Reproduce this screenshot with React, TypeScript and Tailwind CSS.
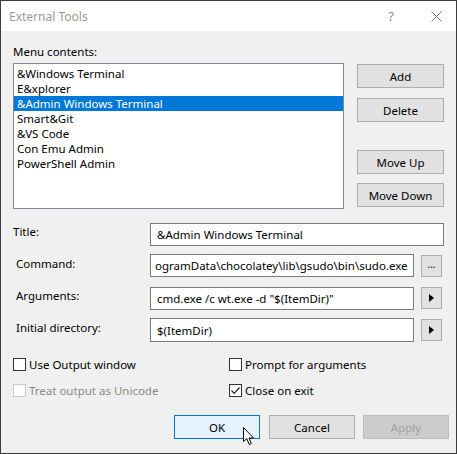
const items = [
  "&Windows Terminal",
  "E&xplorer",
  "&Admin Windows Terminal",
  "Smart&Git",
  "&VS Code",
  "Con Emu Admin",
  "PowerShell Admin",
];

function SideButton({ label, className }: { label: string; className?: string }) {
  return (
    <div
      className={`flex h-[24px] w-[87px] items-center justify-center border border-[#adadad] bg-[#e1e1e1] text-black ${className ?? ""}`}
    >
      {label}
    </div>
  );
}

function Arrow() {
  return (
    <div className="flex h-[22px] w-[21px] items-center justify-center border border-[#adadad] bg-[#e1e1e1]">
      <svg width="5" height="8" viewBox="0 0 5 8">
        <path d="M0 0 L5 4 L0 8 Z" fill="#000" />
      </svg>
    </div>
  );
}

function Check({ checked, disabled, label }: { checked?: boolean; disabled?: boolean; label: string }) {
  return (
    <div className="flex h-[13px] items-center">
      <div
        className={`flex h-[13px] w-[13px] items-center justify-center border bg-white ${disabled ? "border-[#cccccc]" : "border-[#333333]"}`}
      >
        {checked && (
          <svg width="11" height="11" viewBox="0 0 11 11">
            <path d="M1.5 5.5 L4.2 8.3 L9.5 2.5" stroke="#222" strokeWidth="1.2" fill="none" />
          </svg>
        )}
      </div>
      <span className={`ml-[3px] ${disabled ? "text-[#8a8a8a]" : "text-black"}`}>{label}</span>
    </div>
  );
}

export default function App() {
  return (
    <div className="flex h-[454px] w-[457px] flex-col border border-[#3c3c3c] bg-[#f0f0f0] text-[11.5px] leading-[15px] text-black [font-family:'Noto_Sans',sans-serif]">
      {/* title bar */}
      <div className="flex h-[30px] shrink-0 items-center bg-white pl-[8px] text-[#999999]">
        <span className="text-[12px]">External Tools</span>
        <span className="ml-auto text-[13px] text-[#888]">?</span>
        <svg className="ml-[37px] mr-[14px]" width="11" height="11" viewBox="0 0 11 11">
          <path d="M0.5 0.5 L10.5 10.5 M10.5 0.5 L0.5 10.5" stroke="#777" strokeWidth="1" />
        </svg>
      </div>

      <div className="relative flex flex-1 flex-col pl-[12px]">
        <div className="mt-[13px]">Menu contents:</div>

        <div className="mt-[4px] flex">
          <div className="h-[146px] w-[331px] border border-[#828790] bg-white pt-[2px]">
            {items.map((it, i) => (
              <div
                key={it}
                className={`flex h-[15px] items-center pl-[3px] ${i === 2 ? "bg-[#0078d7] text-white" : ""}`}
              >
                {it}
              </div>
            ))}
          </div>
          <div className="ml-[13px] flex flex-col pt-[1px]">
            <SideButton label="Add" />
            <SideButton label="Delete" className="mt-[10px]" />
            <SideButton label="Move Up" className="mt-[28px]" />
            <SideButton label="Move Down" className="mt-[9px]" />
          </div>
        </div>

        {/* form */}
        <div className="mt-[14px] flex items-start">
          <div className="w-[137px] pt-[1px]">Title:</div>
          <div className="flex h-[23px] w-[294px] items-center border border-[#7a7a7a] bg-white px-[6px]">
            &Admin Windows Terminal
          </div>
        </div>
        <div className="mt-[8px] flex items-start">
          <div className="w-[137px] pl-[3px] pt-[2px]">Command:</div>
          <div className="flex h-[23px] w-[264px] items-center overflow-hidden whitespace-nowrap border border-[#7a7a7a] bg-white px-[4px]">
            ogramData\chocolatey\lib\gsudo\bin\sudo.exe
          </div>
          <div className="ml-[7px] mt-[1px] flex h-[22px] w-[21px] items-center justify-center border border-[#adadad] bg-[#e1e1e1] pb-[4px] text-[10px]">
            ...
          </div>
        </div>
        <div className="mt-[10px] flex items-start">
          <div className="w-[137px] pl-[3px] pt-[1px]">Arguments:</div>
          <div className="flex h-[23px] w-[264px] items-center border border-[#7a7a7a] bg-white px-[6px]">
            cmd.exe /c wt.exe -d "$(ItemDir)"
          </div>
          <div className="ml-[7px]">
            <Arrow />
          </div>
        </div>
        <div className="mt-[8px] flex items-start">
          <div className="w-[137px] pl-[3px] pt-[2px]">Initial directory:</div>
          <div className="flex h-[24px] w-[264px] items-center border border-[#7a7a7a] bg-white px-[6px]">
            $(ItemDir)
          </div>
          <div className="ml-[7px] mt-[1px]">
            <Arrow />
          </div>
        </div>

        {/* checkboxes */}
        <div className="mt-[16px] flex">
          <div className="w-[216px]">
            <Check label="Use Output window" />
          </div>
          <Check label="Prompt for arguments" />
        </div>
        <div className="mt-[13px] flex">
          <div className="w-[216px]">
            <Check disabled label="Treat output as Unicode" />
          </div>
          <Check checked label="Close on exit" />
        </div>

        {/* bottom buttons */}
        <div className="mt-[18px] flex pl-[161px]">
          <div className="flex h-[24px] w-[86px] items-center justify-center border border-[#0078d7] bg-[#e5f1fb]">
            OK
          </div>
          <div className="ml-[9px] flex h-[24px] w-[86px] items-center justify-center border border-[#adadad] bg-[#e1e1e1]">
            Cancel
          </div>
          <div className="ml-[8px] flex h-[24px] w-[86px] items-center justify-center border border-[#bfbfbf] bg-[#cccccc] text-[#a0a0a0]">
            Apply
          </div>
        </div>

        {/* mouse cursor */}
        <svg
          className="absolute left-[242px] top-[396px]"
          width="13"
          height="19"
          viewBox="0 0 13 19"
        >
          <path
            d="M0.5 0.5 L0.5 14.5 L3.8 11.5 L6.2 17.5 L8.3 16.6 L6 11 L10.5 11 Z"
            fill="#fff"
            stroke="#000"
            strokeWidth="1"
            strokeLinejoin="round"
          />
        </svg>
      </div>
    </div>
  );
}
